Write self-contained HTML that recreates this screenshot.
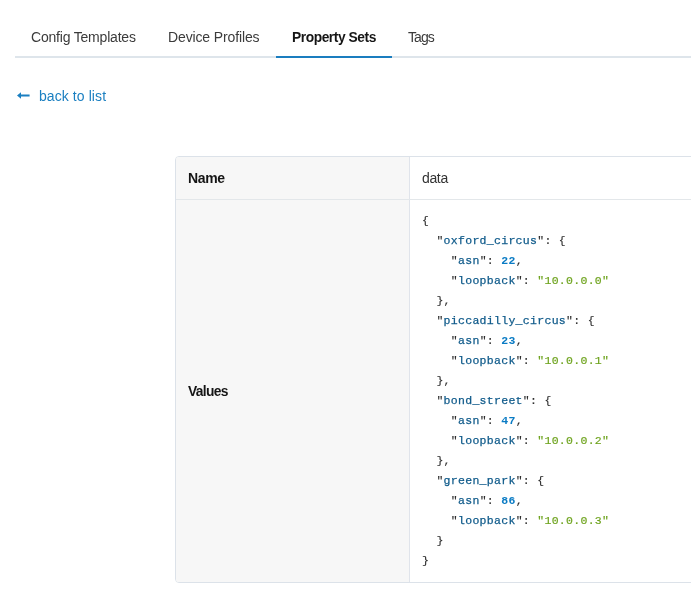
<!DOCTYPE html>
<html>
<head>
<meta charset="utf-8">
<title>Property Sets</title>
<style>
html,body{margin:0;padding:0;background:#fff;}
body{width:691px;height:614px;overflow:hidden;position:relative;font-family:"Liberation Sans",sans-serif;color:#222;}
.tabs{position:absolute;left:15px;top:0;width:676px;height:58px;box-sizing:border-box;border-bottom:2px solid #dee5eb;}
.tab,.back,.lbl,.val,pre{will-change:transform;}
.tab{position:absolute;top:29px;font-size:14px;line-height:17px;color:#3b3b3b;white-space:nowrap;}
.tab.active{font-weight:bold;color:#151515;}
.underline{position:absolute;left:261px;top:56px;width:116px;height:2px;background:#1a7dbf;}
.back{position:absolute;left:38.5px;top:88px;font-size:14px;line-height:17px;color:#1a7fc1;white-space:nowrap;letter-spacing:0.08px;}
.arrow{position:absolute;left:17px;top:92px;width:13px;height:7px;}
.table{position:absolute;left:175px;top:156px;width:540px;height:427px;box-sizing:border-box;border:1px solid #dce2e9;border-radius:4px;background:#fff;overflow:hidden;}
.lcol{position:absolute;left:0;top:0;width:233px;height:100%;background:#f7f7f7;border-right:1px solid #e0e4eb;}
.rowline{position:absolute;left:0;top:42px;width:100%;height:1px;background:#e3e7ea;}
.lbl{position:absolute;font-size:14px;font-weight:bold;color:#151515;line-height:20px;white-space:nowrap;}
.val{position:absolute;left:245.5px;top:11px;font-size:14px;color:#333;line-height:20px;letter-spacing:-0.35px;}
pre{position:absolute;left:246px;top:54px;margin:0;font-family:"Liberation Mono",monospace;font-size:11.5px;letter-spacing:0.3px;line-height:20px;color:#2e2e2e;-webkit-text-stroke:0.15px #2e2e2e;}
.k{color:#0f5a8a;-webkit-text-stroke:0.25px #0f5a8a;}
.n{color:#0a7bc4;font-weight:bold;-webkit-text-stroke:0;}
.s{color:#6ea31e;-webkit-text-stroke:0.2px #6ea31e;}
</style>
</head>
<body>
<div class="tabs">
  <span class="tab" style="left:16px;letter-spacing:-0.2px">Config Templates</span>
  <span class="tab" style="left:153px;letter-spacing:-0.13px">Device Profiles</span>
  <span class="tab active" style="left:277px;font-size:13.8px;letter-spacing:-0.45px">Property Sets</span>
  <span class="tab" style="left:393px;font-size:14px;letter-spacing:-0.95px">Tags</span>
  <div class="underline"></div>
</div>
<svg class="arrow" viewBox="0 0 13 7"><path d="M0 3.5 L4 0.2 L4 2.4 L12.6 2.4 L12.6 4.6 L4 4.6 L4 6.8 Z" fill="#1a7fc1"/></svg>
<div class="back">back to list</div>
<div class="table">
  <div class="lcol"></div>
  <div class="rowline"></div>
  <div class="lbl" style="left:11.5px;top:11px;letter-spacing:-0.37px">Name</div>
  <div class="val">data</div>
  <div class="lbl" style="left:12px;top:225px;font-size:13.8px;letter-spacing:-0.68px">Values</div>
<pre>{
  "<span class="k">oxford_circus</span>": {
    "<span class="k">asn</span>": <span class="n">22</span>,
    "<span class="k">loopback</span>": <span class="s">"10.0.0.0"</span>
  },
  "<span class="k">piccadilly_circus</span>": {
    "<span class="k">asn</span>": <span class="n">23</span>,
    "<span class="k">loopback</span>": <span class="s">"10.0.0.1"</span>
  },
  "<span class="k">bond_street</span>": {
    "<span class="k">asn</span>": <span class="n">47</span>,
    "<span class="k">loopback</span>": <span class="s">"10.0.0.2"</span>
  },
  "<span class="k">green_park</span>": {
    "<span class="k">asn</span>": <span class="n">86</span>,
    "<span class="k">loopback</span>": <span class="s">"10.0.0.3"</span>
  }
}</pre>
</div>
</body>
</html>
